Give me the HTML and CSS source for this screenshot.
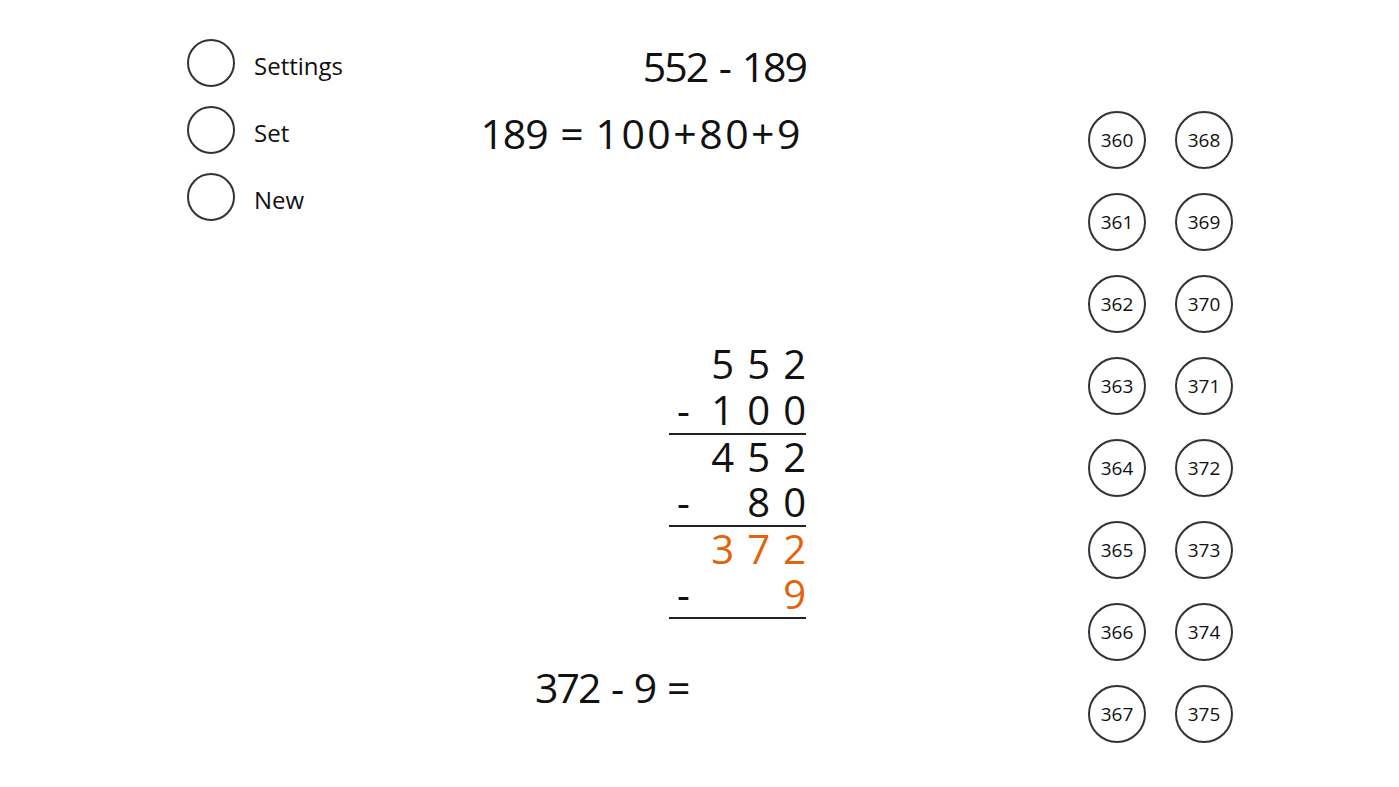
FILE: index.html
```html
<!DOCTYPE html>
<html lang="en">
<head>
    <meta charset="UTF-8">
    <meta name="viewport" content="width=device-width, initial-scale=1.0">
    <title>Subtraction Practice</title>
    <link rel="stylesheet" href="styles.css">
</head>
<body>
    <div class="page">
        <div class="menu">
            <div class="menu-item"><span class="radio"></span><span class="menu-label">Settings</span></div>
            <div class="menu-item"><span class="radio"></span><span class="menu-label">Set</span></div>
            <div class="menu-item"><span class="radio"></span><span class="menu-label">New</span></div>
        </div>

        <div class="main">
            <div class="task">552 - 189</div>
            <div class="split">189 = <span class="spaced">100+80+9</span></div>

            <div class="column">
                <div class="row"><span></span><span>5</span><span>5</span><span>2</span></div>
                <div class="row"><span>-</span><span>1</span><span>0</span><span>0</span></div>
                <div class="row line"><span></span><span>4</span><span>5</span><span>2</span></div>
                <div class="row"><span>-</span><span></span><span>8</span><span>0</span></div>
                <div class="row line current"><span></span><span>3</span><span>7</span><span>2</span></div>
                <div class="row"><span>-</span><span></span><span></span><span class="current">9</span></div>
                <div class="row line"></div>
            </div>

            <div class="question">372 - 9 =</div>
        </div>

        <div class="choices">
            <div class="choice">360</div>
            <div class="choice">368</div>
            <div class="choice">361</div>
            <div class="choice">369</div>
            <div class="choice">362</div>
            <div class="choice">370</div>
            <div class="choice">363</div>
            <div class="choice">371</div>
            <div class="choice">364</div>
            <div class="choice">372</div>
            <div class="choice">365</div>
            <div class="choice">373</div>
            <div class="choice">366</div>
            <div class="choice">374</div>
            <div class="choice">367</div>
            <div class="choice">375</div>
        </div>
    </div>
</body>
</html>
```

FILE: styles.css
```css
body {
    font-family: 'Open Sans', 'Noto Sans', Arial, sans-serif;
    margin: 0;
    background: #fff;
    color: #111;
}
.page {
    display: flex;
    align-items: flex-start;
    height: 787px;
}
.menu {
    width: 260px;
    margin-left: 187px;
    padding-top: 39px;
    display: flex;
    flex-direction: column;
    gap: 19px;
}
.menu-item {
    display: flex;
    align-items: center;
    gap: 19px;
}
.radio {
    width: 44px;
    height: 44px;
    border: 2px solid #333;
    border-radius: 50%;
}
.menu-label {
    font-size: 24px;
    padding-top: 4px;
}
.main {
    width: 359px;
    padding-top: 36px;
    display: flex;
    flex-direction: column;
    align-items: flex-end;
}
.task {
    font-size: 41px;
    line-height: 60px;
    letter-spacing: -2px;
    word-spacing: 3px;
}
.split {
    font-size: 41px;
    line-height: 60px;
    margin-top: 7px;
    margin-right: 3px;
    letter-spacing: -1px;
    word-spacing: 3px;
}
.spaced {
    letter-spacing: 2.5px;
}
.column {
    margin-top: 178px;
    width: 137px;
}
.row {
    display: grid;
    grid-template-columns: 29px 36px 36px 36px;
    font-size: 40px;
    line-height: 46px;
    height: 46px;
}
.row span {
    text-align: right;
}
.row span:first-child {
    text-align: center;
}
.row.line {
    border-top: 2px solid #222;
    height: 44px;
    line-height: 44px;
}
.current, .row.current span {
    color: #e3620c;
}
.question {
    align-self: flex-start;
    margin-left: 88px;
    margin-top: -6px;
    font-size: 41px;
    line-height: 60px;
    letter-spacing: -2px;
    word-spacing: 3px;
}
.choices {
    margin-left: 282px;
    margin-top: 111px;
    display: grid;
    grid-template-columns: 58px 58px;
    column-gap: 29px;
    row-gap: 24px;
}
.choice {
    width: 54px;
    height: 54px;
    border: 2px solid #333;
    border-radius: 50%;
    display: flex;
    align-items: center;
    justify-content: center;
    font-size: 19px;
}
```
